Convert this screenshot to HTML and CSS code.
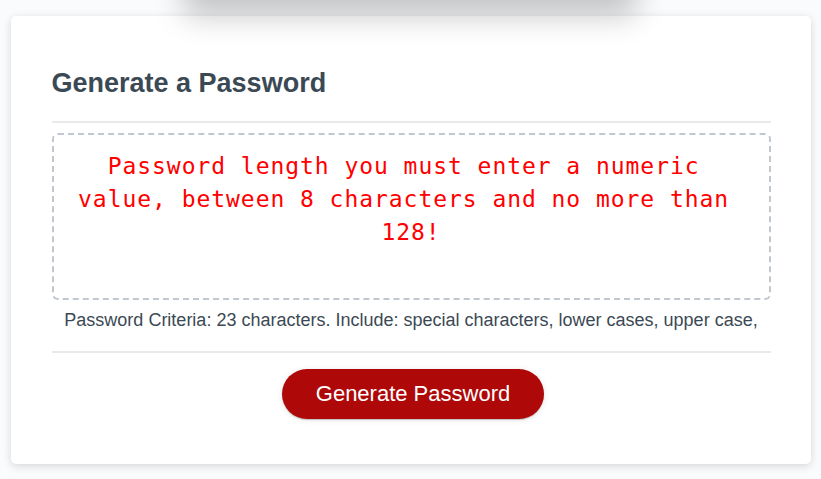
FILE: index.html
```html
<!DOCTYPE html>
<html lang="en">
<head>
<meta charset="UTF-8">
<title>Password Generator</title>
<link rel="stylesheet" href="styles.css">
</head>
<body>
<div class="top-shadow"></div>
<div class="wrapper">
  <div class="card">
    <div class="card-header">
      <h2 class="title">Generate a Password</h2>
    </div>
    <div class="card-body">
      <div class="password" id="password">Password length you must enter a numeric value, between 8 characters and no more than 128!</div>
      <div class="criteria">Password Criteria: 23 characters. Include: special characters, lower cases, upper case,</div>
    </div>
    <div class="card-footer">
      <button class="btn" id="generate">Generate Password</button>
    </div>
  </div>
</div>
</body>
</html>
```

FILE: styles.css
```css
*, *::before, *::after {
  box-sizing: border-box;
}

html, body {
  margin: 0;
  padding: 0;
}

body {
  font-family: "Liberation Sans", Arial, sans-serif;
  background-color: #f9fbfd;
  height: 479px;
  overflow: hidden;
  position: relative;
}

.top-shadow {
  position: absolute;
  top: -60px;
  left: 190px;
  width: 440px;
  height: 60px;
  background: #fff;
  box-shadow: 0 10px 30px 6px rgba(0, 0, 0, 0.22);
  z-index: 2;
}

.wrapper {
  padding: 16px 10px 0;
}

.card {
  background-color: #fff;
  border-radius: 5px;
  box-shadow: rgba(0, 0, 0, 0.15) 0px 2px 8px 0px;
  color: hsl(206, 17%, 28%);
  font-size: 18px;
  margin: 0 auto;
  max-width: 800px;
  padding: 30px 40px 30px 41px;
}

.title {
  font-size: 27px;
  font-weight: bold;
  margin: 22px 0;
  line-height: 31px;
}

.card-header::after {
  content: ' ';
  display: block;
  width: 100%;
  background: #e7e9eb;
  height: 2px;
}

.password {
  margin: 10px 0;
  height: 167px;
  border: 2px dashed #c0c7cf;
  border-radius: 6px;
  padding: 15px;
  overflow: hidden;
  text-align: center;
  white-space: break-spaces;
  color: #ff0000;
  font-family: "DejaVu Sans Mono", "Liberation Mono", monospace;
  font-size: 23px;
  letter-spacing: 0.95px;
  line-height: 33px;
}

.criteria {
  text-align: center;
  line-height: 21px;
  margin-bottom: 20px;
}

.card-footer {
  text-align: center;
}

.card-footer::before {
  content: ' ';
  display: block;
  width: 100%;
  background: #e7e9eb;
  height: 2px;
}

.btn {
  border: none;
  background-color: hsl(360, 91%, 36%);
  border-radius: 25px;
  box-shadow: rgba(0, 0, 0, 0.1) 0px 1px 6px 0px, rgba(0, 0, 0, 0.2) 0px 1px 1px 0px;
  color: #fff;
  display: inline-block;
  font-family: "Liberation Sans", Arial, sans-serif;
  font-size: 22px;
  line-height: 22px;
  margin: 16px 16px 15px 20px;
  padding: 14px 34px;
  text-align: center;
  cursor: pointer;
  vertical-align: top;
}
```
